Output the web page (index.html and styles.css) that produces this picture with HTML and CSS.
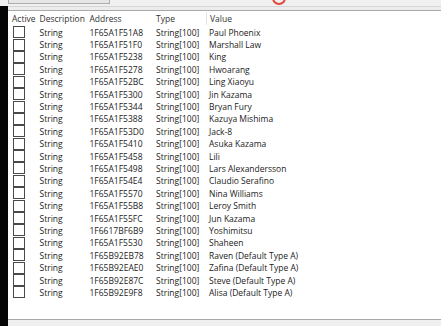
FILE: index.html
```html
<!DOCTYPE html>
<html>
<head>
  <title>Address List</title>
  <link rel="stylesheet" href="styles.css">
</head>
<body>
  <div class="toolbar">
    <div class="toolbar-box"></div>
    <div class="toolbar-icon"></div>
  </div>

  <div class="main">
    <div class="edge"></div>
    <div class="panel">
      <div class="list">
        <div class="splitter"></div>

        <div class="row header">
          <span>Active</span>
          <span>Description</span>
          <span>Address</span>
          <span>Type</span>
          <span class="col-sep">Value</span>
        </div>

        <div class="rows" id="rows"></div>
        <div class="filler"></div>
      </div>
      <div class="footer"></div>
    </div>
  </div>

  <script>
    // Address table entries
    const entries = [
      ['1F65A1F51A8', 'Paul Phoenix'],
      ['1F65A1F51F0', 'Marshall Law'],
      ['1F65A1F5238', 'King'],
      ['1F65A1F5278', 'Hwoarang'],
      ['1F65A1F52BC', 'Ling Xiaoyu'],
      ['1F65A1F5300', 'Jin Kazama'],
      ['1F65A1F5344', 'Bryan Fury'],
      ['1F65A1F5388', 'Kazuya Mishima'],
      ['1F65A1F53D0', 'Jack-8'],
      ['1F65A1F5410', 'Asuka Kazama'],
      ['1F65A1F5458', 'Lili'],
      ['1F65A1F5498', 'Lars Alexandersson'],
      ['1F65A1F54E4', 'Claudio Serafino'],
      ['1F65A1F5570', 'Nina Williams'],
      ['1F65A1F55B8', 'Leroy Smith'],
      ['1F65A1F55FC', 'Jun Kazama'],
      ['1F6617BF6B9', 'Yoshimitsu'],
      ['1F65A1F5530', 'Shaheen'],
      ['1F65B92EB78', 'Raven (Default Type A)'],
      ['1F65B92EAE0', 'Zafina (Default Type A)'],
      ['1F65B92E87C', 'Steve (Default Type A)'],
      ['1F65B92E9F8', 'Alisa (Default Type A)']
    ];

    const rows = document.getElementById('rows');
    entries.forEach(([address, value]) => {
      const row = document.createElement('div');
      row.className = 'row';
      row.innerHTML = `
        <span><span class="check"></span></span>
        <span>String</span>
        <span>${address}</span>
        <span>String[100]</span>
        <span>${value}</span>`;
      rows.appendChild(row);
    });
  </script>
</body>
</html>
```

FILE: styles.css
```css
body {
  margin: 0;
  width: 441px;
  height: 326px;
  overflow: hidden;
  background-color: #f0f0f0;
  font-family: "Open Sans", "Noto Sans", sans-serif;
  font-size: 8.5px;
  color: #222;
}

.toolbar {
  height: 6px;
  display: flex;
  align-items: flex-end;
  overflow: hidden;
  background-color: #f0f0f0;
}

.toolbar-box {
  flex: none;
  width: 100px;
  height: 12px;
  margin-left: 8px;
  margin-bottom: 2px;
  border: 1px solid #adadad;
  background-color: #e6e6e6;
}

.toolbar-icon {
  flex: none;
  width: 10px;
  height: 10px;
  margin-left: 162px;
  margin-bottom: 1px;
  border: 2px solid #e0483e;
  border-radius: 50%;
}

.main {
  display: flex;
  height: 320px;
}

.edge {
  flex: none;
  width: 8px;
  background-color: #050505;
}

.panel {
  flex: 1;
  display: flex;
  flex-direction: column;
}

.list {
  flex: 1;
  display: flex;
  flex-direction: column;
  background-color: #fff;
  border-bottom: 1px solid #a8a8a8;
}

.splitter {
  height: 3px;
  border-top: 1px solid #d6d6d6;
  border-bottom: 1px solid #a9a9a9;
  background-color: #ececec;
}

.row {
  display: grid;
  grid-template-columns: 27.5px 50px 66.5px 53px 1fr;
  align-items: center;
  height: 12.4px;
  padding-left: 4px;
  white-space: nowrap;
}

.header {
  height: 15px;
  color: #333;
}

.col-sep {
  margin-left: -3px;
  padding-left: 3px;
  border-left: 1px solid #e3e3e3;
  line-height: 13px;
}

.check {
  display: block;
  width: 10px;
  height: 10px;
  margin-left: 1px;
  border: 1px solid #4a4a4a;
  background-color: #fff;
}

.filler {
  flex: 1;
}

.footer {
  height: 6px;
}
```
